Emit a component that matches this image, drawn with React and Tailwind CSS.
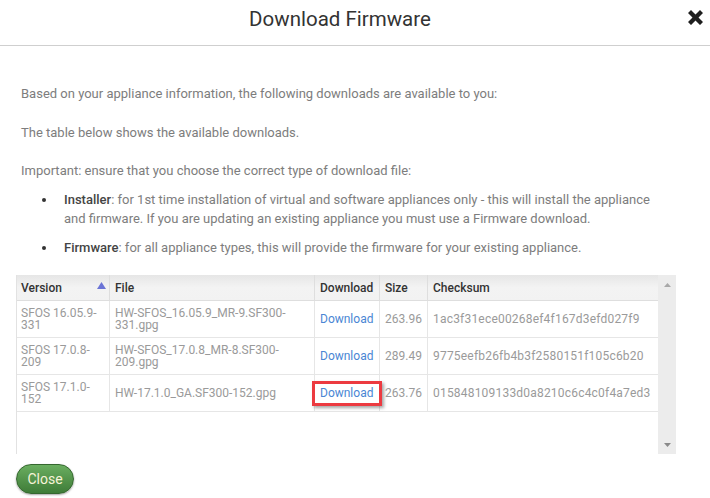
import React from "react";

const rows = [
  { v1: "SFOS 16.05.9-", v2: "331", f1: "HW-SFOS_16.05.9_MR-9.SF300-", f2: "331.gpg", size: "263.96", sum: "1ac3f31ece00268ef4f167d3efd027f9" },
  { v1: "SFOS 17.0.8-", v2: "209", f1: "HW-SFOS_17.0.8_MR-8.SF300-", f2: "209.gpg", size: "289.49", sum: "9775eefb26fb4b3f2580151f105c6b20" },
  { v1: "SFOS 17.1.0-", v2: "152", f1: "HW-17.1.0_GA.SF300-152.gpg", f2: null, size: "263.76", sum: "015848109133d0a8210c6c4c0f4a7ed3", hl: true },
];

export default function App() {
  return (
    <div
      className="w-[710px] h-[498px] bg-white overflow-hidden"
      style={{ fontFamily: "Roboto, 'Liberation Sans', sans-serif" }}
    >
      {/* header */}
      <div className="relative h-[46px] border-b border-[#cfcfcf] flex justify-center pt-[6px] pr-[30px]">
        <div className="text-[20.5px] leading-[26px] text-[#333]">Download Firmware</div>
        <svg className="absolute right-[7px] top-[10px]" width="15" height="15" viewBox="0 0 15 15">
          <path d="M3 0 L7.5 4.5 L12 0 L15 3 L10.5 7.5 L15 12 L12 15 L7.5 10.5 L3 15 L0 12 L4.5 7.5 L0 3 Z" fill="#1e1e1e" />
        </svg>
      </div>

      <div className="pt-[38px] pl-[21px] text-[13px] leading-[19px] text-[#7d7d7d]">
        <p className="mb-[20px]">Based on your appliance information, the following downloads are available to you:</p>
        <p className="mb-[19px]">The table below shows the available downloads.</p>
        <p className="mb-[10px]">Important: ensure that you choose the correct type of download file:</p>
        <div className="flex mb-[10px]">
          <span className="ml-[21px] mt-[8px] w-[4px] h-[4px] rounded-full bg-[#333] shrink-0"></span>
          <span className="ml-[18px]">
            <span className="text-[#444] font-medium">Installer</span>: for 1st time installation of virtual and software appliances only - this will install the appliance
            <br />
            and firmware. If you are updating an existing appliance you must use a Firmware download.
          </span>
        </div>
        <div className="flex">
          <span className="ml-[21px] mt-[8px] w-[4px] h-[4px] rounded-full bg-[#333] shrink-0"></span>
          <span className="ml-[18px]">
            <span className="text-[#444] font-medium">Firmware</span>: for all appliance types, this will provide the firmware for your existing appliance.
          </span>
        </div>
      </div>

      {/* table */}
      <div className="ml-[16px] mt-[18px] w-[660px] h-[179px] flex border-l border-[#e2e2e2]">
        <div className="w-[642px] flex flex-col">
          <div className="grid grid-cols-[93px_205px_65px_48px_230px] h-[26px] bg-gradient-to-b from-[#e6e6e6] via-[#f3f3f3] to-[#f2f2f2] border-b border-[#dedede] text-[12px] text-[#333] font-medium">
            <div className="relative flex items-center pl-[4px] border-r border-[#dedede]">
              Version
              <svg className="absolute left-[80px] top-[7px]" width="9" height="7" viewBox="0 0 9 7">
                <path d="M4.5 0 L9 7 L0 7 Z" fill="#6b74d6" />
              </svg>
            </div>
            <div className="flex items-center pl-[5px] border-r border-[#dedede]">File</div>
            <div className="flex items-center pl-[5px] border-r border-[#dedede]">Download</div>
            <div className="flex items-center pl-[5px] border-r border-[#dedede]">Size</div>
            <div className="flex items-center pl-[5px]">Checksum</div>
          </div>
          {rows.map((r, i) => (
            <div
              key={i}
              className="grid grid-cols-[93px_205px_65px_48px_230px] h-[37px] border-b border-[#e6e6e6] text-[12px] text-[#9a9a9a]"
            >
              <div className="flex flex-col justify-center pl-[4px] leading-[12px] border-r border-[#e6e6e6]">
                <span>{r.v1}</span>
                <span>{r.v2}</span>
              </div>
              <div className="flex flex-col justify-center pl-[5px] leading-[12px] border-r border-[#e6e6e6]">
                <span>{r.f1}</span>
                {r.f2 && <span>{r.f2}</span>}
              </div>
              <div className="relative flex items-center pl-[5px] text-[#4a86d4] border-r border-[#e6e6e6]">
                Download
                {r.hl && (
                  <div className="absolute left-[-3px] right-[-3px] top-[6px] bottom-[5px] border-[3px] border-[#ec3a40] shadow-[2px_2px_3px_rgba(0,0,0,0.35)]"></div>
                )}
              </div>
              <div className="flex items-center pl-[5px] border-r border-[#e6e6e6]">{r.size}</div>
              <div className="flex items-center pl-[5px] tracking-[0.2px]">{r.sum}</div>
            </div>
          ))}
        </div>
        <div className="w-[18px] bg-[#ececec] flex flex-col items-center justify-between pt-[8px] pb-[7px]">
          <svg width="7" height="4" viewBox="0 0 7 4">
            <path d="M3.5 0 L7 4 L0 4 Z" fill="#a8a8a8" />
          </svg>
          <svg width="7" height="4" viewBox="0 0 7 4">
            <path d="M0 0 L7 0 L3.5 4 Z" fill="#8a8a8a" />
          </svg>
        </div>
      </div>

      <div className="ml-[16px] mt-[10px]">
        <button className="w-[58px] h-[30px] rounded-full border border-[#35672f] bg-gradient-to-b from-[#6aae60] to-[#3f7c38] text-[14px] text-[#f6f3d8] shadow-[0_1px_2px_rgba(0,0,0,0.35)]">
          Close
        </button>
      </div>
    </div>
  );
}
